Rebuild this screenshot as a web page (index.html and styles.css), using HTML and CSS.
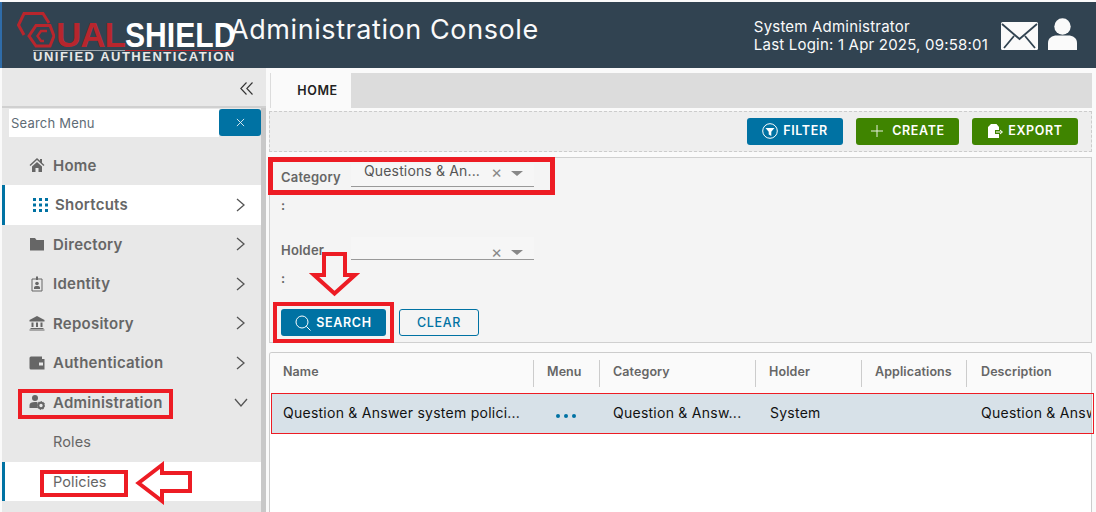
FILE: index.html
```html
<!DOCTYPE html>
<html lang="en">
<head>
<meta charset="utf-8">
<title>DualShield Administration Console</title>
<link rel="stylesheet" href="styles.css">
</head>
<body>
<div class="page">
<header class="topbar">
  <div class="logo">
    <svg class="logo-mark" viewBox="0 0 38 36" width="38" height="36"><g fill="none" stroke="#b8262d"><path d="M7 23L1.500 13L7 1.500H26L32 11" stroke-width="3"/><path d="M12 24L19 13.500H33L37 24L33 34H19Z" stroke-width="3"/><path d="M30 19H24L20.500 24L24 29H27" stroke-width="2.400"/></g></svg>
    <div class="logo-text">
      <div class="logo-name"><span class="logo-ual">UAL</span><span class="logo-shield">SHIELD</span></div>
      <div class="logo-rule"></div>
      <div class="logo-sub">UNIFIED AUTHENTICATION</div>
    </div>
  </div>
  <h1 class="title">Administration Console</h1>
  <div class="user">
    <div class="user-text"><div>System Administrator</div><div>Last Login: 1 Apr 2025, 09:58:01</div></div>
    <svg class="mail" viewBox="0 0 37 28" width="37" height="28"><rect width="37" height="28" rx="1.500" fill="#fafafa"/><path d="M1 2L18.500 17L36 2M3 26L13 14M34 26L24 14" fill="none" stroke="#314351" stroke-width="1.800"/></svg>
    <svg class="person" viewBox="0 0 29 32" width="29" height="32"><circle cx="14.500" cy="8.500" r="8.200" fill="#fafafa"/><path d="M0 32V25C0 20 4 17.500 9 17.500H20C25 17.500 29 20 29 25V32Z" fill="#fafafa"/></svg>
  </div>
</header>
<div class="content">
  <aside class="sidebar">
    <div class="side-main">
      <div class="collapse"><svg viewBox="0 0 13 13" width="13" height="13"><path d="M6.500 .5L.8 6.500L6.500 12.500M12.500 .5L6.800 6.500L12.500 12.500" fill="none" stroke="#333" stroke-width="1.100"/></svg></div>
      <div class="search-row"><div class="search-input">Search Menu</div><div class="search-x"><svg viewBox="0 0 10 10" width="9" height="9"><path d="M1 1L9 9M9 1L1 9" stroke="#e8f0f5" stroke-width="1"/></svg></div></div>
      <nav class="nav">
        <div class="item"><svg class="ico" viewBox="0 0 16 16"><path d="M8 1L0.500 8L1.500 9L8 3L14.500 9L15.500 8L13 5.700V2H11V3.800ZM3 9.500V15H6.500V11H9.500V15H13V9.500L8 5Z" fill="#666"/></svg><span>Home</span></div>
        <div class="item active short"><svg class="ico-grid" viewBox="0 0 15 14"><g fill="#0072a3"><rect width="3" height="3"/><rect x="6" width="3" height="3"/><rect x="12" width="3" height="3"/><rect y="5.500" width="3" height="3"/><rect x="6" y="5.500" width="3" height="3"/><rect x="12" y="5.500" width="3" height="3"/><rect y="11" width="3" height="3"/><rect x="6" y="11" width="3" height="3"/><rect x="12" y="11" width="3" height="3"/></g></svg><span>Shortcuts</span><svg class="chev" viewBox="0 0 9 14"><path d="M1 1L8 7L1 13" fill="none" stroke="#555" stroke-width="1.300"/></svg></div>
        <div class="item"><svg class="ico" viewBox="0 0 16 16"><path d="M1 2H6L7.500 4H15V14.500H1Z" fill="#666"/></svg><span>Directory</span><svg class="chev" viewBox="0 0 9 14"><path d="M1 1L8 7L1 13" fill="none" stroke="#555" stroke-width="1.300"/></svg></div>
        <div class="item"><svg class="ico" viewBox="0 0 16 16"><path d="M3 3H13V15H3Z" fill="none" stroke="#666" stroke-width="1"/><path d="M7 0.500H9V4H7Z" fill="#666"/><circle cx="8" cy="7.500" r="1.800" fill="#666"/><path d="M5 13V11.500C5 10.500 6 10 8 10S11 10.500 11 11.500V13Z" fill="#666"/></svg><span>Identity</span><svg class="chev" viewBox="0 0 9 14"><path d="M1 1L8 7L1 13" fill="none" stroke="#555" stroke-width="1.300"/></svg></div>
        <div class="item"><svg class="ico" viewBox="0 0 16 16"><path d="M8 1L0.500 5V6.500H15.500V5ZM2.500 7.500H4.500V12H2.500ZM7 7.500H9V12H7ZM11.500 7.500H13.500V12H11.500ZM1.500 13H14.500V14H1.500ZM0.500 14.500H15.500V15.500H0.500Z" fill="#666"/></svg><span>Repository</span><svg class="chev" viewBox="0 0 9 14"><path d="M1 1L8 7L1 13" fill="none" stroke="#555" stroke-width="1.300"/></svg></div>
        <div class="item"><svg class="ico" viewBox="0 0 16 16"><path fill-rule="evenodd" d="M2 1.500H13V4H15.500V14.500H2A1.500 1.500 0 0 1 .5 13V3A1.500 1.500 0 0 1 2 1.500ZM10 7.500V10.500H14V7.500Z" fill="#666"/></svg><span>Authentication</span><svg class="chev" viewBox="0 0 9 14"><path d="M1 1L8 7L1 13" fill="none" stroke="#555" stroke-width="1.300"/></svg></div>
        <div class="item"><svg class="ico" viewBox="0 0 16 16"><circle cx="6" cy="4" r="3" fill="#666"/><path d="M0.500 14V11C0.500 9 2.500 8 6 8C7 8 8 8.100 8.500 8.300V14Z" fill="#666"/><circle cx="12" cy="11.500" r="2.700" fill="none" stroke="#666" stroke-width="2"/><circle cx="12" cy="11.500" r="4" fill="none" stroke="#666" stroke-width="1" stroke-dasharray="1.500 1.500"/></svg><span>Administration</span><svg class="chev down" viewBox="0 0 14 9"><path d="M1 1L7 8L13 1" fill="none" stroke="#555" stroke-width="1.300"/></svg></div>
        <div class="sub">Roles</div>
        <div class="sub active">Policies</div>
      </nav>
    </div>
    <div class="scroll"></div>
  </aside>
  <main class="main">
    <div class="tabs"><div class="tab">HOME</div></div>
    <div class="toolbar">
      <button class="btn blue"><svg viewBox="0 0 16 16" width="16" height="16"><circle cx="8" cy="8" r="7.300" fill="none" stroke="#fff" stroke-width="1"/><path d="M3.500 5H12.500L9.300 8.800V13L6.700 11.500V8.800Z" fill="#fff"/></svg>FILTER</button>
      <button class="btn green"><svg class="plus" viewBox="0 0 14 14" width="14" height="14"><path d="M7 1V13M1 7H13" stroke="#e8f0e0" stroke-width="1"/></svg>CREATE</button>
      <button class="btn green"><svg viewBox="0 0 16 16" width="16" height="16"><path d="M4 1H9.500L12 4V7H8V11H12V15H1V4Z" fill="#fff"/><path d="M9 9H15M13 7L15.500 9L13 11" fill="none" stroke="#fff" stroke-width="1"/></svg>EXPORT</button>
    </div>
    <section class="filter">
      <div class="field"><label class="flabel">Category<br><span class="colon">:</span></label><div class="select"><span class="val">Questions &amp; An...</span><span class="clear">×</span><span class="caret"></span></div></div>
      <div class="field second"><label class="flabel">Holder<br><span class="colon">:</span></label><div class="select"><span class="val"></span><span class="clear">×</span><span class="caret"></span></div></div>
      <div class="actions">
        <button class="btn blue search"><svg viewBox="0 0 16 16" width="16" height="16"><circle cx="7" cy="7" r="6" fill="none" stroke="#fff" stroke-width="1"/><path d="M11.300 11.300L15.500 15.500" stroke="#fff" stroke-width="1"/></svg>SEARCH</button>
        <button class="btn outline">CLEAR</button>
      </div>
    </section>
    <section class="grid">
      <div class="row head">
        <div class="c name">Name</div><div class="c menu">Menu</div><div class="c cat">Category</div><div class="c hold">Holder</div><div class="c apps">Applications</div><div class="c desc">Description</div>
      </div>
      <div class="row data">
        <div class="c name">Question &amp; Answer system polici...</div><div class="c menu"><span class="dots"><i></i><i></i><i></i></span></div><div class="c cat">Question &amp; Answ...</div><div class="c hold">System</div><div class="c apps"></div><div class="c desc">Question &amp; Answer system policies</div>
      </div>
    </section>
  </main>
</div>
<div class="mark m-cat"></div>
<div class="mark m-search"></div>
<div class="mark m-admin"></div>
<div class="mark m-pol"></div>
<div class="mark m-row"></div>
<svg class="arrow a-down" viewBox="0 0 52 48" width="52" height="48"><path d="M16 4H37V25H47L26.500 43.500L6 25H16Z" fill="none" stroke="#ed1c24" stroke-width="4"/></svg>
<svg class="arrow a-left" viewBox="0 0 60 44" width="60" height="44"><path d="M4.500 22L28 4V12H56V30H28V40Z" fill="none" stroke="#ed1c24" stroke-width="4"/></svg>
</div>
</body>
</html>
```
FILE: styles.css
```css
* { box-sizing: border-box; }
html, body { margin: 0; height: 100%; overflow: hidden; }
body { background: #fafafa; font-family: "Inter", "Liberation Sans", sans-serif; color: #333; }
.page { position: relative; width: 1096px; height: 512px; padding: 2px 0 0 2px; overflow: hidden; }
.page::before { content: ""; position: absolute; left: 0; top: 2px; width: 2px; height: 66px; background: #2f6ca8; }
.topbar { height: 66px; background: #314351; color: #fafafa; display: flex; align-items: flex-start; }
.logo { width: 228px; margin-left: 15px; flex: none; position: relative; }
.logo-mark { position: absolute; left: 0; top: 10px; }
.logo-text { margin-left: 16px; padding-top: 18px; width: 206px; }
.logo-name { font: 700 35px/30px "Liberation Sans", sans-serif; white-space: nowrap; height: 30px; padding-left: 23px; display: flex; }
.logo-ual { color: #b8262d; letter-spacing: -1px; flex: none; }
.logo-shield { color: #fff; display: inline-block; flex: none; width: 110px; transform: scaleX(.86); transform-origin: left center; }
.logo-rule { height: 1px; width: 201px; background: linear-gradient(to right, #a0a8ae 92px, #b8262d 92px); }
.logo-sub { font: 700 13px/12px "Liberation Sans", sans-serif; color: #e8e8e8; white-space: nowrap; letter-spacing: 1.5px; }
.title { margin: 12px 0 0 -15px; font-size: 27px; line-height: 32px; font-weight: 400; letter-spacing: .58px; white-space: nowrap; }
.user { margin-left: auto; display: flex; align-items: flex-start; padding-right: 19px; }
.user-text { font-size: 15px; line-height: 17px; padding-top: 16px; margin-right: 13px; white-space: nowrap; letter-spacing: .2px; }
.user-text div + div { margin-top: 0.5px; }
.mail { margin-top: 20px; }
.person { margin-top: 16px; margin-left: 10px; }
.content { display: flex; height: 444px; }
.sidebar { width: 264px; flex: none; display: flex; background: #e8e8e8; }
.side-main { width: 259px; flex: none; }
.scroll { width: 5px; background: #c8c8c8; margin-top: 40px; }
.collapse { height: 40px; display: flex; align-items: center; justify-content: flex-end; padding: 2px 13px 0 0; border-bottom: 2px solid #d0d0d0; margin-right: -5px; }
.search-row { display: flex; height: 28px; padding-left: 7px; margin-top: 1px; }
.search-input { width: 210px; background: #fff; font-size: 13px; line-height: 28px; padding-left: 2px; color: #5e6b75; letter-spacing: .2px; }
.search-x { width: 42px; height: 27px; background: #0072a3; border-radius: 3px; display: flex; align-items: center; justify-content: center; }
.nav { margin-top: 8.600px; }
.item { height: 39.500px; display: flex; align-items: center; padding: 0 16px 0 27px; font-size: 15px; font-weight: 600; color: #666; position: relative; letter-spacing: .25px; }
.item .ico { width: 16px; height: 16px; margin-right: 8px; flex: none; }
.item .chev { width: 9px; height: 14px; margin-left: auto; }
.item .chev.down { width: 14px; height: 9px; margin-right: -3px; }
.item.active, .sub.active { background: #fff; border-left: 3px solid #0072a3; }
.item.short { padding-left: 28px; }
.ico-grid { width: 15px; height: 14px; margin-right: 7px; flex: none; }
.sub { height: 39.500px; padding-left: 51px; font-size: 14.500px; line-height: 39px; color: #666; letter-spacing: .1px; }
.sub.active { padding-left: 48px; }
.main { width: 823px; margin-left: 3px; flex: none; padding-top: 5px; }
.tabs { height: 35px; background: #dcdcdc; margin-left: 1px; padding-left: 1px; }
.tab { width: 80px; height: 35px; background: #fafafa; font-size: 12.500px; font-weight: 600; letter-spacing: .6px; text-align: center; line-height: 36px; color: #222; padding-left: 13px; }
.toolbar { height: 41px; margin-top: 3px; background: #eeeeee; border: 1px dashed #ccc; display: flex; justify-content: flex-end; align-items: center; gap: 13px; padding-right: 13px; }
.btn { height: 27px; border: 0; border-radius: 3px; font: 600 12.500px/27px "Inter", "Liberation Sans", sans-serif; letter-spacing: .65px; display: flex; align-items: center; justify-content: center; gap: 5px; padding: 0 0 1px; color: #fff; }
.btn svg { margin-top: 1px; }
.toolbar .btn { padding-bottom: 2px; }
.btn.blue { background: #0072a3; width: 96px; }
.btn.green { background: #3f8400; width: 103px; }
.btn.green:nth-child(3) { width: 106px; }
.plus { margin-right: 3px; }
.filter { height: 186px; margin-top: 5px; background: #f4f4f4; border: 1px solid #d0d0d0; padding: 0 0 0 11px; }
.field { display: flex; height: 73px; padding-top: 5px; font-size: 13.500px; }
.field.second { height: 78px; }
.flabel { width: 70px; font-weight: 600; font-size: 13px; line-height: 28px; color: #666; letter-spacing: .2px; }
.colon { font-weight: 600; }
.select { width: 183px; height: 23px; margin-top: 1px; border-bottom: 1px solid #999; display: flex; align-items: flex-start; font-size: 14px; line-height: 14px; color: #555; background: #f6f6f6; position: relative; letter-spacing: .15px; }
.val { width: 140px; margin-left: 13px; white-space: nowrap; flex: none; }
.clear { position: absolute; left: 140px; top: 0; font-size: 17px; line-height: 16px; color: #888; }
.caret { position: absolute; left: 160px; top: 7px; border: 5px solid transparent; border-top: 5px solid #888; border-left-width: 6px; border-right-width: 6px; }
.second .clear { top: 7px; }
.second .caret { top: 13px; }
.actions { display: flex; gap: 13px; }
.btn.search { width: 105px; gap: 5px; }
.btn.outline { width: 80px; background: transparent; border: 1px solid #0072a3; color: #0072a3; font-weight: 500; }
.grid { margin-top: 9px; height: 170px; background: #fff; border: 1px solid #ccc; border-radius: 3px; border-bottom: 0; overflow: hidden; }
.row { display: flex; white-space: nowrap; }
.head { height: 40px; background: #fafafa; font-size: 12.500px; font-weight: 600; color: #666; align-items: center; letter-spacing: .1px; }
.head .c { height: 27px; line-height: 23px; border-left: 1px solid #ccc; }
.head .c:first-child { border-left: 0; }
.head .desc { padding-left: 14px; }
.data { height: 41px; margin-left: 1px; background: #d7e1e8; font-size: 14px; line-height: 39px; color: #111; letter-spacing: .25px; }
.c { padding-left: 13px; overflow: hidden; flex: none; }
.name { width: 263px; }
.menu { width: 66px; }
.cat { width: 156px; }
.hold { width: 106px; }
.apps { width: 105px; }
.desc { width: 130px; }
.data .name { width: 263px; padding-left: 12px; }
.data .cat { width: 157px; }
.dots { display: flex; gap: 4px; margin: 21px 0 0 9px; }
.dots i { width: 4px; height: 4px; border-radius: 50%; background: #0072a3; }
.mark { position: absolute; border: 4px solid #ed1c24; }
.m-cat { left: 268px; top: 157px; width: 287px; height: 38px; border-width: 5px; }
.m-search { left: 273px; top: 302px; width: 121px; height: 41px; }
.m-admin { left: 18px; top: 389px; width: 155px; height: 30px; }
.m-pol { left: 40px; top: 470px; width: 88px; height: 27px; }
.m-row { left: 271px; top: 393px; width: 823px; height: 41px; border-width: 1px; }
.arrow { position: absolute; }
.a-down { left: 308px; top: 250px; }
.a-left { left: 134px; top: 461px; }
```
